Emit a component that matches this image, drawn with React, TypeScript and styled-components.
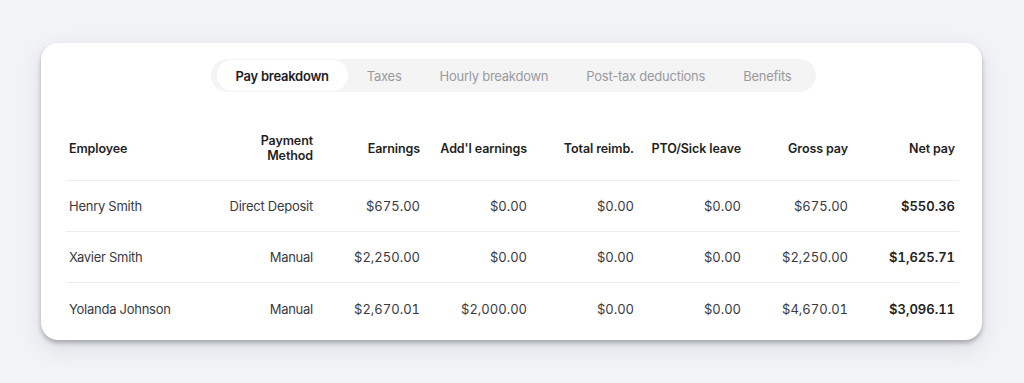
import styled, { createGlobalStyle } from "styled-components";

const TABS = ["Pay breakdown", "Taxes", "Hourly breakdown", "Post-tax deductions", "Benefits"];

const HEADERS = [
  "Employee",
  "Payment Method",
  "Earnings",
  "Add'l earnings",
  "Total reimb.",
  "PTO/Sick leave",
  "Gross pay",
  "Net pay",
];

const ROWS = [
  ["Henry Smith", "Direct Deposit", "$675.00", "$0.00", "$0.00", "$0.00", "$675.00", "$550.36"],
  ["Xavier Smith", "Manual", "$2,250.00", "$0.00", "$0.00", "$0.00", "$2,250.00", "$1,625.71"],
  ["Yolanda Johnson", "Manual", "$2,670.01", "$2,000.00", "$0.00", "$0.00", "$4,670.01", "$3,096.11"],
];

const Global = createGlobalStyle`
  html, body {
    margin: 0;
    padding: 0;
    background: #f1f3f7;
    font-family: Inter, "Noto Sans", sans-serif;
    -webkit-font-smoothing: antialiased;
  }
`;

const Page = styled.div`
  width: 1024px;
  height: 383px;
  box-sizing: border-box;
  padding: 43px 42px 0 41px;
`;

const Card = styled.div`
  background: #fff;
  border-radius: 17px;
  height: 297px;
  box-sizing: border-box;
  padding: 16px 21px 0 25px;
  box-shadow: 0 3px 4px rgba(60, 64, 70, 0.35), 0 8px 22px rgba(60, 64, 70, 0.12);
  display: flex;
  flex-direction: column;
  align-items: center;
`;

const TabBar = styled.div`
  display: flex;
  background: #f4f4f5;
  border-radius: 17px;
  padding: 1px 6px;
  height: 33px;
  box-sizing: border-box;
`;

const Tab = styled.div<{ $active?: boolean }>`
  display: flex;
  align-items: center;
  padding: 0 19px;
  border-radius: 16px;
  font-size: 13px;
  letter-spacing: -0.25px;
  font-weight: ${(p) => (p.$active ? 600 : 400)};
  color: ${(p) => (p.$active ? "#1d1d1f" : "#9a9a9e")};
  background: ${(p) => (p.$active ? "#fff" : "transparent")};
`;

const Table = styled.div`
  align-self: stretch;
  margin-top: 24px;
  display: grid;
  grid-template-columns: 140px 111px repeat(6, 107px);
`;

const HeadCell = styled.div<{ $left?: boolean }>`
  display: flex;
  align-items: center;
  justify-content: ${(p) => (p.$left ? "flex-start" : "flex-end")};
  text-align: ${(p) => (p.$left ? "left" : "right")};
  padding: 0 4px 0 3px;
  height: 65px;
  box-sizing: border-box;
  font-size: 12.5px;
  font-weight: 600;
  letter-spacing: -0.1px;
  color: #1f1f22;
  line-height: 15px;
  border-bottom: 1px solid #ececee;
`;

const Cell = styled.div<{ $left?: boolean; $text?: boolean; $bold?: boolean; $last?: boolean }>`
  display: flex;
  align-items: center;
  justify-content: ${(p) => (p.$left ? "flex-start" : "flex-end")};
  padding: 0 4px 0 3px;
  height: 51.2px;
  box-sizing: border-box;
  font-size: 13px;
  letter-spacing: ${(p) => (p.$text ? "-0.25px" : "0")};
  font-variant-numeric: tabular-nums;
  font-weight: ${(p) => (p.$bold ? 600 : 400)};
  color: ${(p) => (p.$bold ? "#1f1f22" : "#3a3a3e")};
  border-bottom: ${(p) => (p.$last ? "none" : "1px solid #ececee")};
  white-space: nowrap;
`;

const App = () => {
  return (
    <Page>
      <Global />
      <Card>
        <TabBar>
          {TABS.map((t, i) => (
            <Tab key={t} $active={i === 0}>
              {t}
            </Tab>
          ))}
        </TabBar>
        <Table>
          {HEADERS.map((h, i) => (
            <HeadCell key={h} $left={i === 0}>
              {i === 1 ? (
                <span>
                  Payment
                  <br />
                  Method
                </span>
              ) : (
                h
              )}
            </HeadCell>
          ))}
          {ROWS.map((row, r) =>
            row.map((v, i) => (
              <Cell
                key={r + "-" + i}
                $left={i === 0}
                $text={i < 2}
                $bold={i === 7}
                $last={r === ROWS.length - 1}
              >
                {v}
              </Cell>
            ))
          )}
        </Table>
      </Card>
    </Page>
  );
};

export default App;
